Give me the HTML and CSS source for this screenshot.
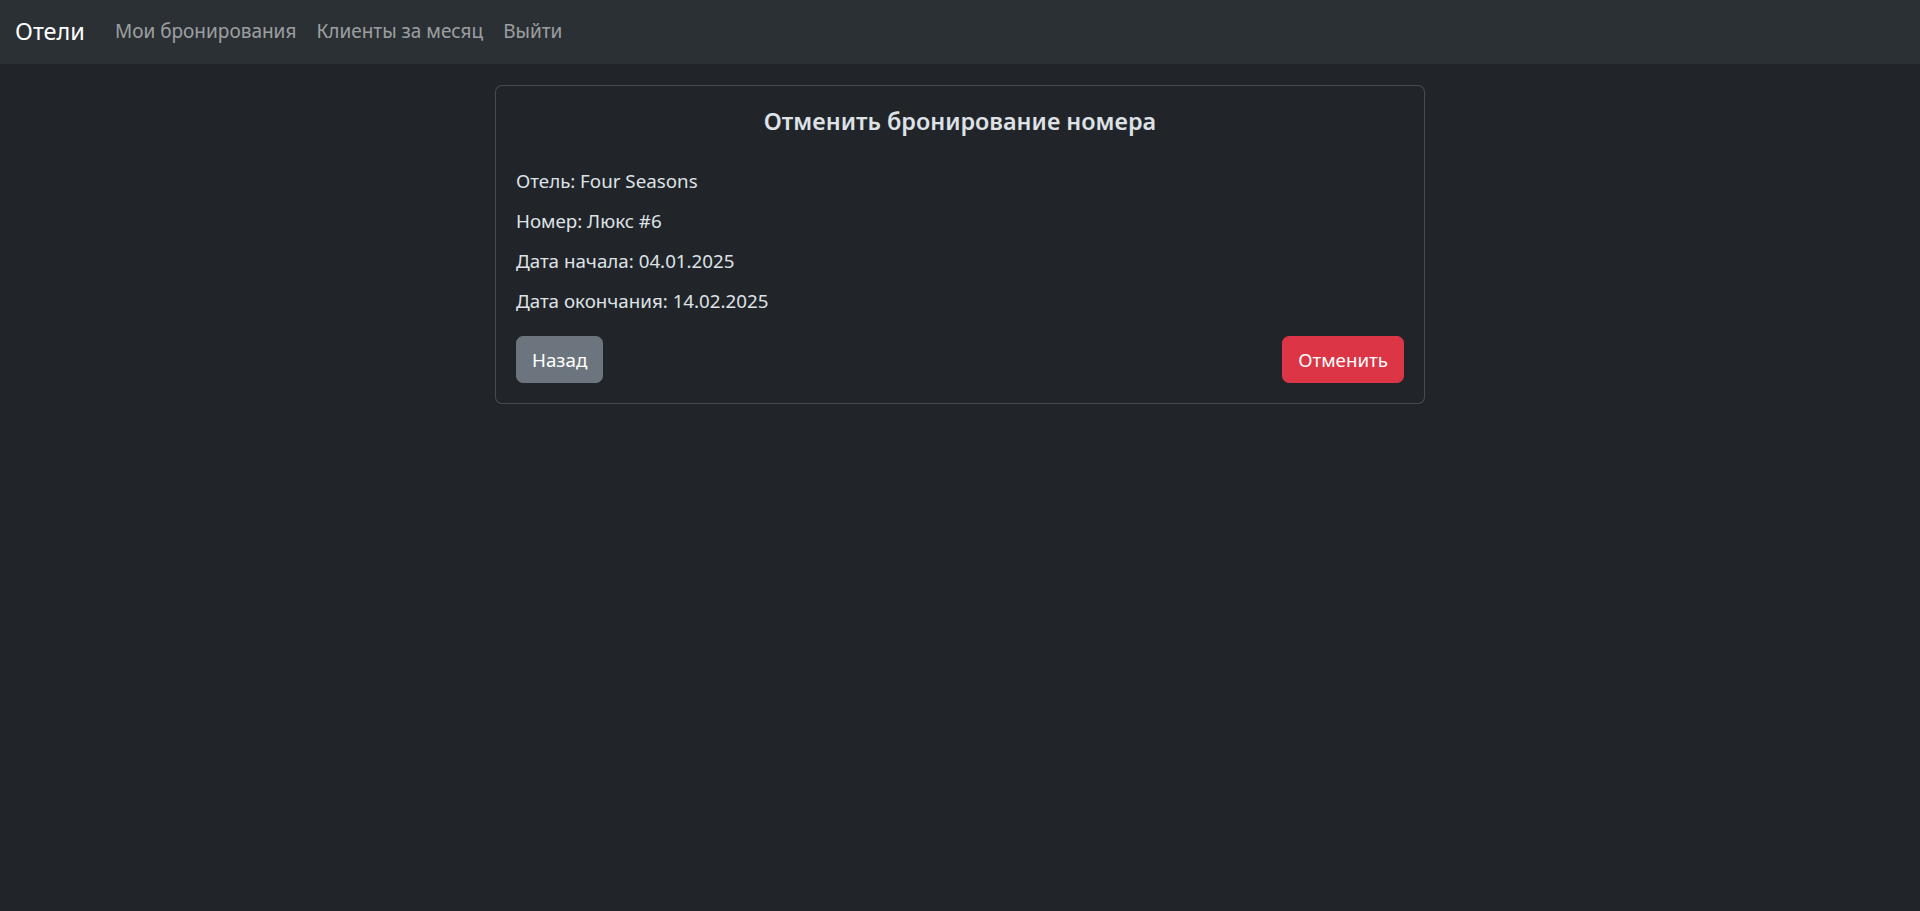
FILE: index.html
```html
<!DOCTYPE html>
<html lang="ru">
<head>
<meta charset="utf-8">
<title>Отели</title>
<link rel="stylesheet" href="styles.css">
</head>
<body>
<nav class="navbar">
  <a class="brand" href="#">Отели</a>
  <ul class="nav">
    <li><a class="nav-link" href="#">Мои бронирования</a></li>
    <li><a class="nav-link" href="#">Клиенты за месяц</a></li>
    <li><a class="nav-link" href="#">Выйти</a></li>
  </ul>
</nav>
<main class="container">
  <div class="card">
    <h5 class="card-title">Отменить бронирование номера</h5>
    <p class="info">Отель: Four Seasons</p>
    <p class="info">Номер: Люкс #6</p>
    <p class="info">Дата начала: 04.01.2025</p>
    <p class="info">Дата окончания: 14.02.2025</p>
    <div class="actions">
      <a class="btn btn-secondary" href="#">Назад</a>
      <button class="btn btn-danger" type="button">Отменить</button>
    </div>
  </div>
</main>
</body>
</html>
```

FILE: styles.css
```css
* { box-sizing: border-box; }
html, body { margin: 0; padding: 0; }
body {
  background: #212529;
  color: #dee2e6;
  font-family: "Noto Sans", "Open Sans", sans-serif;
  font-size: 18.75px;
  line-height: 30px;
  min-height: 911px;
}
.navbar {
  background: #2b3035;
  height: 64px;
  display: flex;
  align-items: center;
  padding: 0 15px 2px;
}
.brand {
  color: #fff;
  text-decoration: none;
  font-size: 23.5px;
  line-height: 30px;
  margin-right: 20px;
}
.nav {
  list-style: none;
  margin: 0;
  padding: 0;
  display: flex;
}
.nav-link {
  display: block;
  color: rgba(255, 255, 255, 0.55);
  text-decoration: none;
  padding: 5px 10px;
  font-size: 19px;
  line-height: 30px;
}
.container {
  display: flex;
  justify-content: center;
  padding-top: 21px;
}
.card {
  width: 930px;
  border: 1px solid rgba(255, 255, 255, 0.175);
  border-radius: 7px;
  padding: 20px;
  background: #212529;
}
.card-title {
  margin: 0 0 30px;
  text-align: center;
  font-size: 23.4px;
  font-weight: 600;
  line-height: 30px;
}
.info {
  margin: 0 0 10px;
  line-height: 30px;
}
.actions {
  display: flex;
  justify-content: space-between;
  margin-top: 20px;
}
.btn {
  display: inline-block;
  font-family: inherit;
  font-size: 18.75px;
  line-height: 30px;
  padding: 7.5px 15px;
  border: 1px solid transparent;
  border-radius: 7px;
  color: #fff;
  text-decoration: none;
  cursor: pointer;
}
.btn-secondary { background: #6c757d; border-color: #6c757d; }
.btn-danger { background: #dc3545; border-color: #dc3545; }
```
